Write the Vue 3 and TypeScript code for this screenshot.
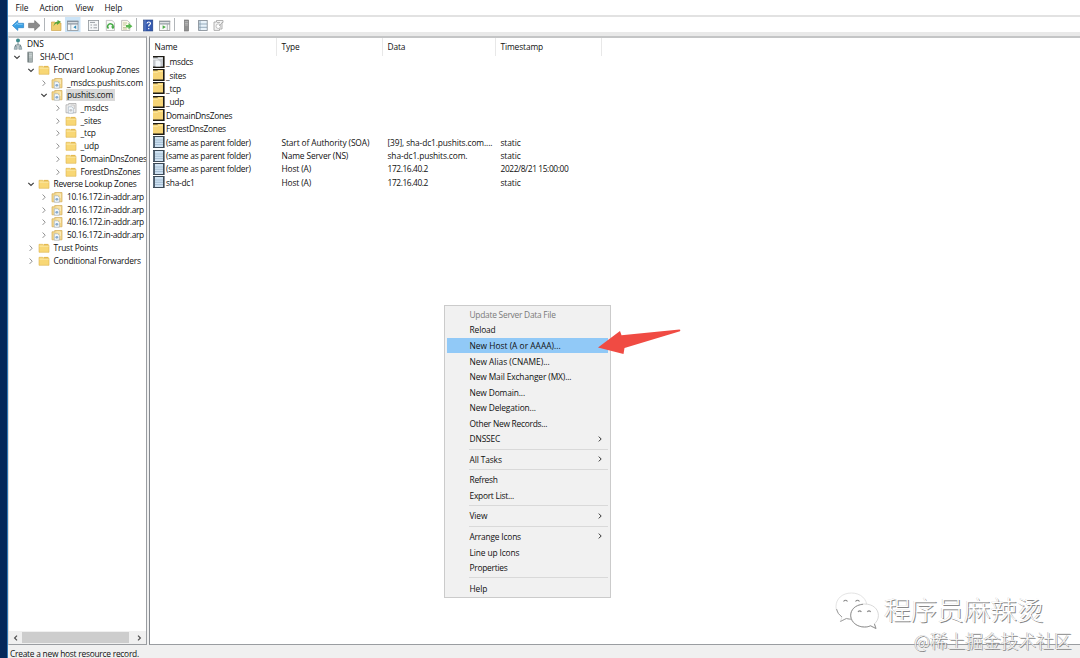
<script setup lang="ts">
type IconKind = 'dns' | 'server' | 'folder' | 'zone' | 'grayzone'
interface TreeNode { label: string; depth: number; icon: IconKind; state: 'open' | 'closed' | 'none'; selected?: boolean; fit?: string }
interface RecordRow { name: string; kind: 'gray' | 'folder' | 'record'; type?: string; data?: string; time?: string }
interface MenuItem { label?: string; sub?: boolean; disabled?: boolean; active?: boolean; fit?: string }

const menus: string[] = ['File', 'Action', 'View', 'Help']

const tree: TreeNode[] = [
  { label: 'DNS', depth: 0, icon: 'dns', state: 'none' },
  { label: 'SHA-DC1', depth: 1, icon: 'server', state: 'open' },
  { label: 'Forward Lookup Zones', depth: 2, icon: 'folder', state: 'open', fit: 'snug' },
  { label: '_msdcs.pushits.com', depth: 3, icon: 'zone', state: 'closed' },
  { label: 'pushits.com', depth: 3, icon: 'zone', state: 'open', selected: true },
  { label: '_msdcs', depth: 4, icon: 'grayzone', state: 'closed' },
  { label: '_sites', depth: 4, icon: 'folder', state: 'closed' },
  { label: '_tcp', depth: 4, icon: 'folder', state: 'closed' },
  { label: '_udp', depth: 4, icon: 'folder', state: 'closed' },
  { label: 'DomainDnsZones', depth: 4, icon: 'folder', state: 'closed', fit: 'tight' },
  { label: 'ForestDnsZones', depth: 4, icon: 'folder', state: 'closed', fit: 'tight' },
  { label: 'Reverse Lookup Zones', depth: 2, icon: 'folder', state: 'open', fit: 'tight' },
  { label: '10.16.172.in-addr.arp', depth: 3, icon: 'zone', state: 'closed', fit: 'address' },
  { label: '20.16.172.in-addr.arp', depth: 3, icon: 'zone', state: 'closed', fit: 'address' },
  { label: '40.16.172.in-addr.arp', depth: 3, icon: 'zone', state: 'closed', fit: 'address' },
  { label: '50.16.172.in-addr.arp', depth: 3, icon: 'zone', state: 'closed', fit: 'address' },
  { label: 'Trust Points', depth: 2, icon: 'folder', state: 'closed', fit: 'snug' },
  { label: 'Conditional Forwarders', depth: 2, icon: 'folder', state: 'closed', fit: 'snug' },
]

const rows: RecordRow[] = [
  { name: '_msdcs', kind: 'gray' },
  { name: '_sites', kind: 'folder' },
  { name: '_tcp', kind: 'folder' },
  { name: '_udp', kind: 'folder' },
  { name: 'DomainDnsZones', kind: 'folder' },
  { name: 'ForestDnsZones', kind: 'folder' },
  { name: '(same as parent folder)', kind: 'record', type: 'Start of Authority (SOA)', data: '[39], sha-dc1.pushits.com....', time: 'static' },
  { name: '(same as parent folder)', kind: 'record', type: 'Name Server (NS)', data: 'sha-dc1.pushits.com.', time: 'static' },
  { name: '(same as parent folder)', kind: 'record', type: 'Host (A)', data: '172.16.40.2', time: '2022/8/21 15:00:00' },
  { name: 'sha-dc1', kind: 'record', type: 'Host (A)', data: '172.16.40.2', time: 'static' },
]

const startsWithDigit = (s?: string): boolean => !!s && /^\d/.test(s)

const context: MenuItem[] = [
  { label: 'Update Server Data File', disabled: true, fit: 'tight' },
  { label: 'Reload' },
  { label: 'New Host (A or AAAA)...', active: true, fit: 'wide' },
  { label: 'New Alias (CNAME)...', fit: 'loose' },
  { label: 'New Mail Exchanger (MX)...' },
  { label: 'New Domain...' },
  { label: 'New Delegation...' },
  { label: 'Other New Records...', fit: 'tight' },
  { label: 'DNSSEC', sub: true },
  {},
  { label: 'All Tasks', sub: true },
  {},
  { label: 'Refresh', fit: 'tight' },
  { label: 'Export List...', fit: 'tight' },
  {},
  { label: 'View', sub: true },
  {},
  { label: 'Arrange Icons', sub: true, fit: 'snug' },
  { label: 'Line up Icons' },
  { label: 'Properties', fit: 'tight' },
  {},
  { label: 'Help' },
]
</script>

<template>
  <div class="screen">
    <div class="desktop"></div>
    <div class="window">
      <nav class="menubar">
        <span v-for="m in menus" :key="m" :class="'m-' + m.toLowerCase()">{{ m }}</span>
      </nav>

      <div class="toolbar">
        <svg width="240" height="16" viewBox="0 0 240 16">
          <!-- back / forward -->
          <path d="M3.500 8.500 8.800 3.600V6.300H14.600V10.700H8.800V13.400Z" fill="#3aa0e4" stroke="#2a7fc4" stroke-width=".7" />
          <path d="M5.500 8.300 8.400 6 8.600 7.300H13.600" fill="none" stroke="#8bd0f7" stroke-width=".8" />
          <path d="M31 8.500 25.700 3.600V6.300H19.600V10.700H25.700V13.400Z" fill="#8c8c8c" stroke="#747474" stroke-width=".7" />
          <path d="M35.500 1V14M127.500 1V14M165.500 1V14" stroke="#a8adb1" stroke-width=".9" />
          <!-- up one level -->
          <path d="M42.500 5H46L47 6H52V13.500H42.500Z" fill="#efcf70" stroke="#c69b3d" stroke-width=".6" />
          <path d="M44.500 9.500Q45.500 6.500 48 6.300V8L52 4.800 48.500 3V4.500Q45 5 44.500 9.500Z" fill="#54a53c" />
          <!-- console tree toggle -->
          <rect x="56" y="0" width="15.500" height="15.500" fill="#cce4f7" />
          <g fill="#f5f7f8" stroke="#8e9499" stroke-width=".8">
            <rect x="58.400" y="4" width="10.600" height="9.400" />
            <rect x="79.400" y="3.400" width="10.200" height="10.200" />
          </g>
          <path d="M58 4.600H69.400M58.600 6.800H69" stroke="#87939f" stroke-width="1.300" />
          <path d="M61.800 7V13.200" stroke="#9aa4ad" stroke-width=".8" />
          <path d="M67.200 8.300V12L64.400 10.150Z" fill="#368dbb" />
          <!-- properties -->
          <path d="M81 5.400H86M81.500 8H83M84.500 8H88M81.500 10.800H83M84.500 10.800H88" stroke="#9a9fa5" stroke-width="1" />
          <!-- refresh -->
          <path d="M97.300 3.400H103L105.500 5.800V13.500H97.300Z" fill="#fafafa" stroke="#aaa" stroke-width=".7" />
          <path d="M99.500 11.500A2.700 2.700 0 1 1 103.800 10.600" fill="none" stroke="#45aa45" stroke-width="1.500" />
          <path d="M102 9.500H105.500L104 12.500Z" fill="#45aa45" />
          <!-- export -->
          <path d="M112.600 3.400H118.300L120.800 5.800V13.500H112.600Z" fill="#fcf8e8" stroke="#aaa" stroke-width=".7" />
          <path d="M114 6H118M114 8H117M114 10.500H117M114 12H118" stroke="#aab27d" stroke-width=".7" />
          <path d="M117 8H119.500V6L123.400 9.200 119.500 12.300V10.400H117Z" fill="#59b850" />
          <!-- help -->
          <rect x="134.600" y="3" width="9.200" height="11" fill="#3459b0" stroke="#23417e" stroke-width=".6" />
          <path d="M136 3V14" stroke="#7895d2" stroke-width=".7" />
          <path d="M138 6.500Q138.200 5 139.800 5T141.500 6.500Q141.400 7.400 140.300 8 139.700 8.500 139.700 9.500M139.700 11V12.200" fill="none" stroke="#fff" stroke-width="1.200" />
          <!-- action pane toggle -->
          <rect x="150.400" y="4" width="10.400" height="9.400" fill="#fafafa" stroke="#999" stroke-width=".8" />
          <path d="M150 4.700H161.200M150.500 6.800H161" stroke="#939ba2" stroke-width="1.200" />
          <path d="M158.300 7V13.200" stroke="#a0a6ab" stroke-width=".8" />
          <path d="M153.600 8.200 156.900 10.100 153.600 12Z" fill="#4dac48" />
          <!-- server -->
          <rect x="175.400" y="3" width="4.200" height="11" fill="#929292" stroke="#707070" stroke-width=".6" />
          <path d="M176 4.700H179M176 6.400H179M176 8H179" stroke="#d0d0d0" stroke-width=".6" />
          <!-- record list -->
          <rect x="189.600" y="3.500" width="8.600" height="10" fill="#e8f2fa" stroke="#7e8790" stroke-width=".8" />
          <path d="M189.600 7H198M189.600 10.300H198M191 3.500V13.500" stroke="#8299ac" stroke-width=".8" />
          <!-- zone -->
          <path d="M205 5H207.500V3.500H214V5.500H213V12H210.500V13.400H205Z" fill="#f3f3f3" stroke="#a0a0a0" stroke-width=".8" />
          <circle cx="209.300" cy="9.200" r="2.300" fill="#fff" stroke="#aaa" stroke-width=".7" />
          <path d="M208 5.500H211M210 9 213 6" stroke="#aaa" stroke-width=".8" />
        </svg>
      </div>

      <main class="panes">
        <section class="tree">
          <div v-for="(n, i) in tree" :key="i" class="node" :class="['d' + n.depth]">
            <span class="twist">
              <svg v-if="n.state !== 'none'" width="8" height="8" viewBox="0 0 8 8">
                <path v-if="n.state === 'open'" d="M1.300 2.800 4 5.500 6.700 2.800" fill="none" stroke="#404040" stroke-width="1.200" />
                <path v-else d="M2.600 1.500 5.200 4.200 2.600 6.900" fill="none" stroke="#909090" stroke-width="1" />
              </svg>
            </span>
            <svg class="ico" width="12" height="12" viewBox="0 0 12 12">
              <g v-if="n.icon === 'dns'">
                <circle cx="6" cy="2.600" r="2" fill="#3e8b8d" />
                <path d="M6 4.500V7M3.500 9V7H8.500V9" fill="none" stroke="#70858a" stroke-width="1" />
                <path d="M2.200 11.300 2.800 8.200H5.200V11.300ZM6.800 11.300V8.200H9.200L9.800 11.300Z" fill="#a9bbc1" stroke="#75888e" stroke-width=".6" />
              </g>
              <g v-else-if="n.icon === 'server'">
                <rect x="3.800" y="1" width="4.800" height="10.200" fill="#a8b3b3" stroke="#7e8889" stroke-width=".6" />
                <path d="M4.500 2.800H8M4.500 4.400H8M4.500 6H8" stroke="#e0e8e8" stroke-width=".6" />
                <path d="M4.300 1.500V11" stroke="#5e6969" stroke-width=".8" />
              </g>
              <g v-else-if="n.icon === 'folder'">
                <path d="M1 2.300H4.800L5.800 3.300H11V10.300H1Z" fill="#f8d775" stroke="#ddb34d" stroke-width=".6" />
                <path d="M5.700 1.900H10.400V3.300H5.700Z" fill="#e4b94f" />
                <path d="M1.500 4.200H10.700" stroke="#fdebad" stroke-width=".8" />
              </g>
              <g v-else>
                <path d="M1 2.800H3.700V1.500H11V10.800H1Z" :fill="n.icon === 'zone' ? '#f3d88e' : '#eeeeee'" :stroke="n.icon === 'zone' ? '#d3ac59' : '#a4a4a4'" stroke-width=".7" />
                <path d="M3.300 4.800H6.800L8.300 6.300V11.200H3.300Z" fill="#f5f9fc" stroke="#9aaab8" stroke-width=".6" />
                <circle cx="5.800" cy="8.300" r="1.400" :fill="n.icon === 'zone' ? '#86abd0' : '#c3c6ca'" />
                <path d="M5.500 3H9.300V7" fill="none" :stroke="n.icon === 'zone' ? '#fff3cc' : '#bcbcbc'" stroke-width=".8" />
              </g>
            </svg>
            <span class="label" :class="[n.fit, { selected: n.selected }]">{{ n.label }}</span>
          </div>
          <div class="hscroll">
            <svg width="8" height="8" viewBox="0 0 8 8"><path d="M5 1.600 2.600 4 5 6.400" fill="none" stroke="#505050" stroke-width="1.200" /></svg>
            <div class="thumb"></div>
            <svg width="8" height="8" viewBox="0 0 8 8"><path d="M3 1.600 5.400 4 3 6.400" fill="none" stroke="#505050" stroke-width="1.200" /></svg>
          </div>
        </section>

        <section class="list">
          <div class="grid head">
            <span>Name</span><span>Type</span><span>Data</span><span>Timestamp</span>
          </div>
          <div v-for="(r, i) in rows" :key="i" class="grid row">
            <span class="name tight">
              <svg width="12" height="12" viewBox="0 0 12 12">
                <g v-if="r.kind === 'record'">
                  <rect x="0" y="0" width="11.600" height="12" fill="#3c4a57" />
                  <rect x="2" y="1" width="8" height="10" fill="#cfe2f2" />
                  <path d="M2 4H10M2 6.300H10M2 8.600H10" stroke="#93afc6" stroke-width=".7" />
                  <path d="M.9 1V11" stroke="#8496a6" stroke-width=".7" />
                </g>
                <g v-else>
                  <rect width="11.600" height="12" fill="#1d1a14" />
                  <path d="M0 1.500H4.200L5.200 1H10V10.400H0Z" :fill="r.kind === 'gray' ? '#c3c7cb' : '#f6d477'" />
                  <path d="M0 3.300H4.500L5.600 2.500H9.600" fill="none" :stroke="r.kind === 'gray' ? '#eef0f2' : '#fdeaa9'" stroke-width=".9" />
                  <path v-if="r.kind === 'gray'" d="M2.500 4.500H6L7.500 6V10.400H2.500Z" fill="#f3f7fa" />
                </g>
              </svg>{{ r.name }}</span>
            <span>{{ r.type }}</span>
            <span :class="{ digits: startsWithDigit(r.data) }">{{ r.data }}</span>
            <span :class="{ digits: startsWithDigit(r.time) }">{{ r.time }}</span>
          </div>
        </section>
      </main>

      <footer class="status">Create a new host resource record.</footer>
    </div>

    <div class="context">
      <template v-for="(c, i) in context" :key="i">
        <div v-if="c.label" class="item" :class="{ disabled: c.disabled, active: c.active }">
          <span :class="c.fit">{{ c.label }}</span>
          <svg v-if="c.sub" width="8" height="8" viewBox="0 0 8 8"><path d="M2.800 1.600 5.200 4 2.800 6.400" fill="none" stroke="#333" stroke-width="1" /></svg>
        </div>
        <div v-else class="sep"></div>
      </template>
    </div>

    <svg class="arrow" width="90" height="30" viewBox="0 0 90 30">
      <path d="M3 22.500 25 6 26.500 10.200 84.500 4.600Q86 5 85 6.200L29.500 23 28.500 29Z" fill="#f04b43" />
    </svg>

    <div class="brand">
      <svg width="46" height="40" viewBox="0 0 46 40">
        <g fill="#fff" stroke-linejoin="round">
          <path d="M17.500 2C8 2 2 8 2 15.500c0 4.500 2.300 8 6 10.400L6.300 30.500l6-3c9 2.500 19-2 20.500-11C33.500 8 26.500 2 17.500 2Z" stroke="#dcdcdc" stroke-width=".8" />
          <path d="M6.300 30.500l6-3c2 .6 4 .7 6 .6M2.500 18Q3.500 23 8 26" fill="none" stroke="#a0a0a0" stroke-width="1" />
          <path d="M30.500 13C22 13 16.500 18 16.500 24.500S22.500 36 30.500 36c2.500 0 4.300-.4 6-1.200l5.500 2.700-1.600-4.600c2.500-2.200 4-5 4-8.400C44.400 18 39 13 30.500 13Z" stroke="#cfcfcf" stroke-width=".8" />
          <path d="M29 13.300C21 14 16.500 19 16.700 25c.7 6.500 6.500 11 13.800 11 2.500 0 4.300-.4 6-1.200l5.500 2.700-1.600-4.600" fill="none" stroke="#959595" stroke-width="1" />
        </g>
        <path d="M9.500 10.500q2-2.500 4 0M21.500 10.500q2-2.500 4 0M24 21q1.700-2.200 3.400 0M33.300 21q1.700-2.200 3.400 0" fill="none" stroke="#8b8b8b" stroke-width="1.200" />
      </svg>
      <span>程序员麻辣烫</span>
    </div>
    <div class="mark">@稀土掘金技术社区</div>
  </div>
</template>

<style>
html, body { margin: 0; overflow: hidden; background: #fff; }
</style>

<style scoped>
.screen {
  position: relative; display: flex; width: 1080px; height: 658px; overflow: hidden;
  font-family: "Open Sans", "Noto Sans", sans-serif; font-size: 8.4px; letter-spacing: -0.12px;
  color: #101010; white-space: nowrap; background: #fff;
}
.snug { letter-spacing: -0.19px; }
.tight { letter-spacing: -0.25px; }
.digits { letter-spacing: -0.4px; }
.address { letter-spacing: -0.33px; }
.loose { letter-spacing: -0.02px; }
.wide { letter-spacing: 0.01px; }
.desktop { width: 8px; box-sizing: border-box; flex: none; background: #04285a; border-right: 1px solid #3179b5; }
.window { flex: 1; min-width: 0; display: flex; flex-direction: column; background: #f0f0f0; }
.menubar { height: 15px; flex: none; display: flex; background: #fff; border-bottom: 2px solid #e2e2e2; line-height: 15px; padding-left: 7.5px; }
.m-file { width: 24px; }
.m-action { width: 36px; }
.m-view { width: 29px; }
.toolbar { height: 15px; flex: none; background: #fff; padding-left: 1px; }
.toolbar svg { display: block; }
.panes { height: 609px; flex: none; border-top: 4px solid #e9e9e9; display: flex; }
.tree, .list { box-sizing: border-box; background: #fff; border-top: 2px solid #c4c5c6; border-bottom: 1px solid #9a9da1; overflow: hidden; }
.tree { width: 139px; border-right: 1px solid #9a9da1; display: flex; flex-direction: column; border-left: 1px solid #ddd; }
.list { flex: 1; margin-left: 2px; border-left: 1px solid #868a90; }
.node { height: 12.72px; flex: none; display: flex; align-items: center; }
.twist { width: 8px; height: 8px; display: flex; flex: none; }
.ico { flex: none; margin: 0 3px 0 3px; }
.d0 { margin-left: -8px; }
.d1 { margin-left: 4px; }
.d2 { margin-left: 17.5px; }
.d3 { margin-left: 31px; }
.d4 { margin-left: 44.5px; }
.d0 .ico { margin-right: 2px; }
.label { line-height: 12px; padding: 0 2px 0 1px; }
.selected { background: #d9d9d9; }
.hscroll { margin-top: auto; height: 13px; display: flex; align-items: center; background: #f0f0f0; padding: 0 2px 0 2px; }
.hscroll svg { flex: none; margin: 0 1px; }
.thumb { width: 107px; height: 11px; margin: 0 5px 0 1px; background: #cdcdcd; flex: none; }
.grid { display: grid; grid-template-columns: 127px 106px 113px 106px; }
.grid span { box-sizing: border-box; padding-left: 4.5px; }
.head { height: 16.9px; line-height: 18px; }
.head span { border-right: 1px solid #e8e8e8; }
.row { height: 13.43px; line-height: 13px; align-items: center; }
.row .name { padding-left: 3px; display: flex; align-items: center; }
.name svg { flex: none; margin-right: 1px; }
.status { height: 12px; line-height: 17px; padding-left: 2px; letter-spacing: -0.24px; }
.context {
  position: absolute; left: 444px; top: 305px; width: 167px; height: 293px; box-sizing: border-box;
  border: 1px solid #cbcbcb; background: #f1f1f1; padding: .6px 2px;
}
.item { height: 15.55px; line-height: 15px; padding-left: 22.5px; padding-right: 4px; display: flex; align-items: center; justify-content: space-between; }
.disabled { color: #7a7a7a; }
.active { background: #91c9f7; }
.sep { height: 5px; margin-left: 22px; background: linear-gradient(#d9d9d9, #d9d9d9) 0 2px / 100% 1px no-repeat; }
.arrow { position: absolute; left: 595px; top: 325px; }
.brand { position: absolute; left: 834px; top: 590px; display: flex; align-items: center; }
.brand span {
  margin-left: 4px; font: 300 26.6px/37px "Noto Sans CJK SC", sans-serif; letter-spacing: 0; color: #fff;
  text-shadow: 1px 1px 0 #888, -.4px -.4px 0 #ccc; margin-bottom: 4px;
}
.mark {
  position: absolute; left: 914px; top: 628px; font: 300 17.7px/24px "Noto Sans CJK SC", sans-serif; letter-spacing: 0; color: #f7f7f7;
  text-shadow: .8px .8px 0 #888, -.5px -.5px 0 #aaa;
}
</style>
